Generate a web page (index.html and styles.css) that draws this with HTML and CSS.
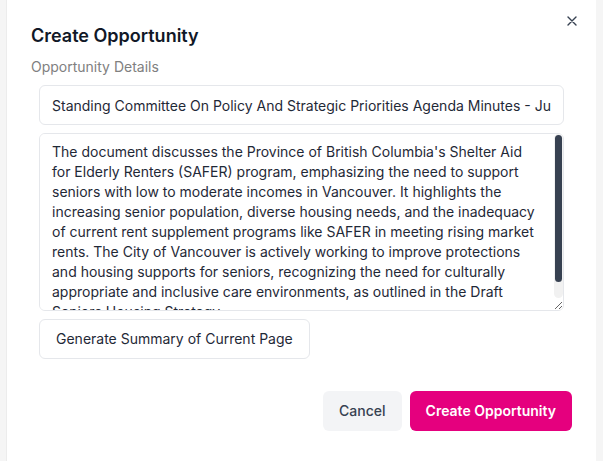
FILE: index.html
```html
<!DOCTYPE html>
<html lang="en">
<head>
    <meta charset="UTF-8">
    <meta name="viewport" content="width=device-width, initial-scale=1.0">
    <title>Create Opportunity</title>
    <link rel="stylesheet" href="styles.css">
</head>
<body>

    <div class="modal">
        <button class="close-button" aria-label="Close">
            <svg width="10" height="10" viewBox="0 0 10 10">
                <path d="M1 1 L9 9 M9 1 L1 9" stroke="#374151" stroke-width="1.4" stroke-linecap="round"/>
            </svg>
        </button>

        <h1>Create Opportunity</h1>
        <div class="label">Opportunity Details</div>

        <div class="fields">
            <input type="text" class="field" value="Standing Committee On Policy And Strategic Priorities Agenda Minutes - June 2024">
            <div class="summary-wrap">
                <textarea class="field summary" rows="8">The document discusses the Province of British Columbia's Shelter Aid for Elderly Renters (SAFER) program, emphasizing the need to support seniors with low to moderate incomes in Vancouver. It highlights the increasing senior population, diverse housing needs, and the inadequacy of current rent supplement programs like SAFER in meeting rising market rents. The City of Vancouver is actively working to improve protections and housing supports for seniors, recognizing the need for culturally appropriate and inclusive care environments, as outlined in the Draft Seniors Housing Strategy.</textarea>
                <div class="scroll-track"><div class="scroll-thumb"></div></div>
            </div>
            <div>
                <button class="outline-button">Generate Summary of Current Page</button>
            </div>
        </div>

        <div class="footer">
            <button class="cancel-button">Cancel</button>
            <button class="primary-button">Create Opportunity</button>
        </div>
    </div>

</body>
</html>
```

FILE: styles.css
```css
html, body {
    height: 100%;
}
body {
    font-family: Inter, "Noto Sans", Arial, sans-serif;
    margin: 0;
    padding: 0 7px 0 6px;
    background-color: #f5f5f5;
    box-sizing: border-box;
    color: #1f2937;
}
.modal {
    position: relative;
    height: 100%;
    box-sizing: border-box;
    background-color: white;
    border-left: 1px solid #ececec;
    padding: 24px 24px 0 24px;
}
.close-button {
    position: absolute;
    top: 16px;
    right: 19px;
    width: 10px;
    height: 10px;
    padding: 0;
    border: none;
    background: none;
    display: flex;
}
h1 {
    margin: 0;
    font-size: 18px;
    line-height: 24px;
    font-weight: 600;
    color: #111827;
}
.label {
    margin-top: 9px;
    font-size: 14px;
    line-height: 20px;
    color: #808080;
}
.fields {
    margin: 8px 8px 0 8px;
    display: flex;
    flex-direction: column;
    gap: 8px;
}
.field {
    width: 100%;
    box-sizing: border-box;
    font-family: inherit;
    font-size: 14px;
    line-height: 20px;
    color: #1f2937;
    border: 1px solid #e5e7eb;
    border-radius: 6px;
    padding: 8px 12px;
    outline: none;
}
input.field {
    height: 40px;
}
.summary-wrap {
    position: relative;
}
.summary {
    height: 178px;
    padding-right: 22px;
    resize: vertical;
    display: block;
}
.scroll-track {
    position: absolute;
    top: 1px;
    right: 1px;
    width: 9px;
    height: 164px;
    background-color: #f1f1f1;
    border-radius: 5px;
}
.scroll-thumb {
    margin: 1px 0 0 1px;
    width: 7px;
    height: 147px;
    background-color: #374151;
    border-radius: 4px;
}
.outline-button {
    font-family: inherit;
    font-size: 14px;
    line-height: 20px;
    color: #1f2937;
    background-color: white;
    border: 1px solid #e5e7eb;
    border-radius: 6px;
    padding: 9px 16px;
    cursor: pointer;
}
.footer {
    display: flex;
    justify-content: flex-end;
    gap: 8px;
    margin-top: 32px;
}
.cancel-button, .primary-button {
    font-family: inherit;
    font-size: 14px;
    line-height: 20px;
    height: 40px;
    border: none;
    border-radius: 6px;
    padding: 0 16px;
    cursor: pointer;
}
.cancel-button {
    background-color: #f3f4f6;
    color: #374151;
    font-weight: 500;
}
.primary-button {
    background-color: #e5007e;
    color: white;
    font-weight: 600;
}
```
